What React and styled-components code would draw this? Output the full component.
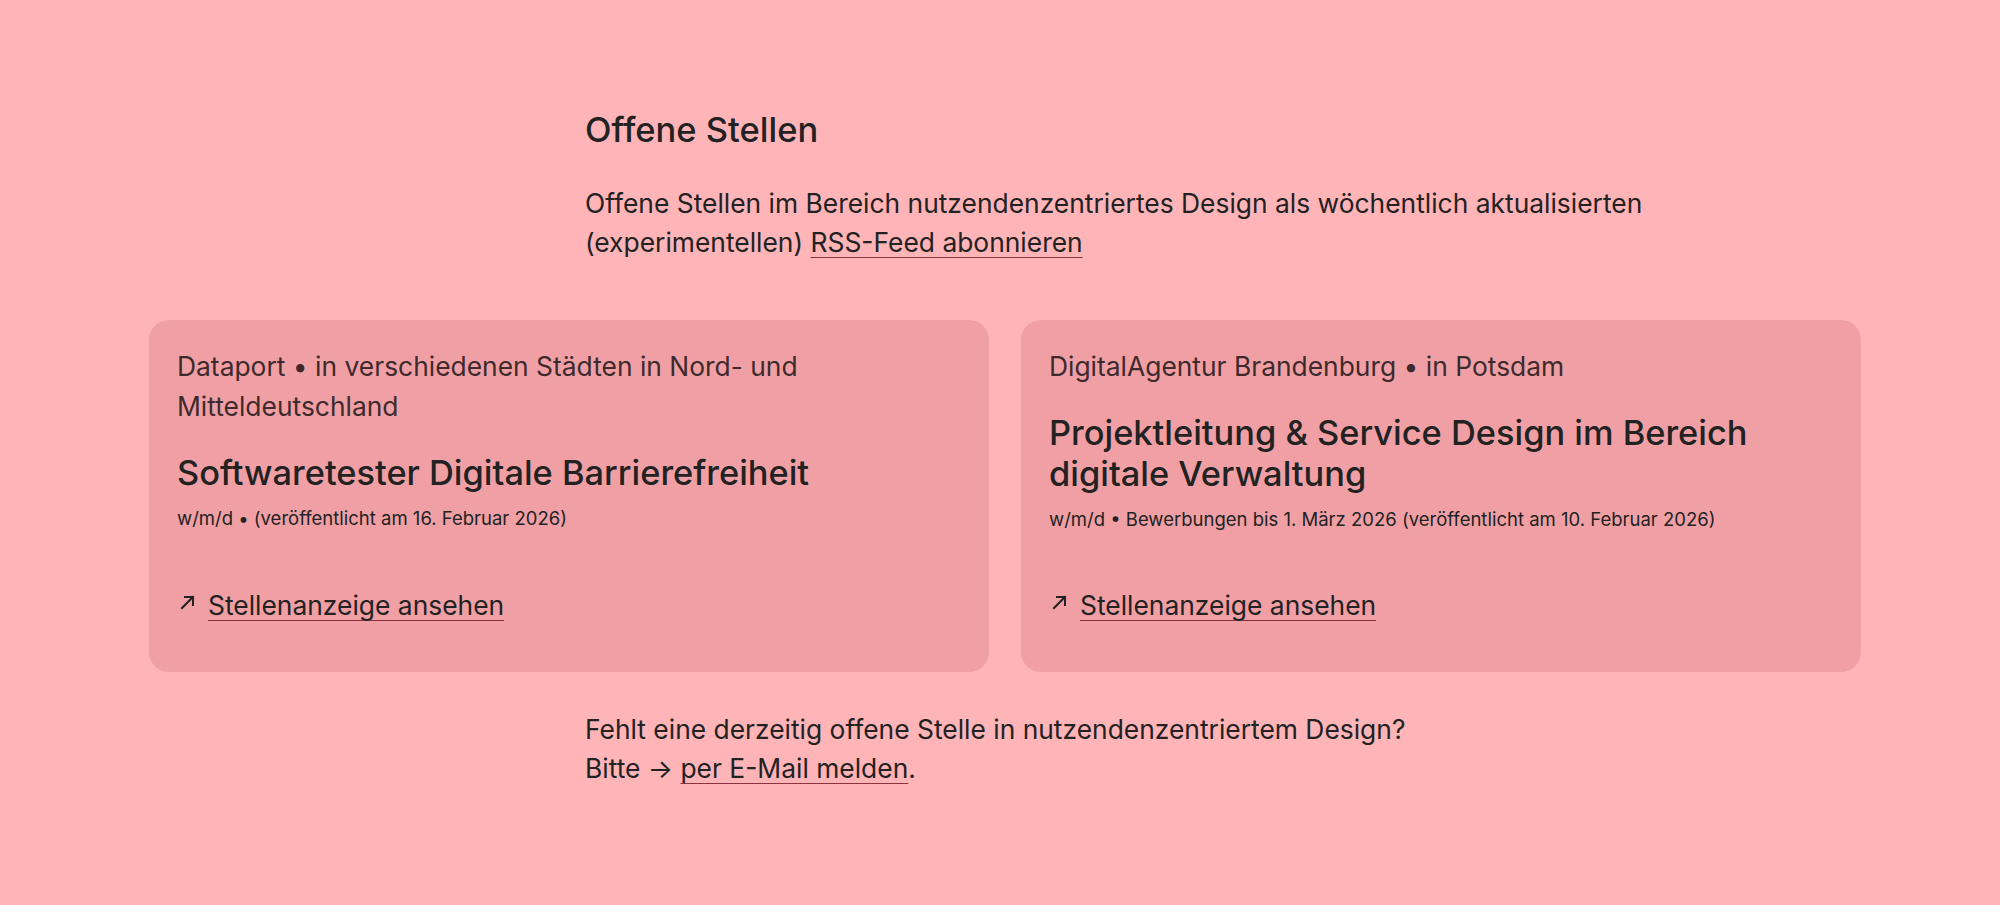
import React from "react";
import styled, { createGlobalStyle } from "styled-components";

const Global = createGlobalStyle`
  html, body { margin: 0; padding: 0; }
  body {
    background: #ffb4b8;
    font-family: Inter, "Noto Sans", sans-serif;
    color: #222222;
    -webkit-font-smoothing: antialiased;
  }
`;

const Page = styled.main`
  padding: 110px 0 80px 149px;
`;

const Intro = styled.section`
  margin-left: 436px;
  max-width: 1120px;
`;

const Heading = styled.h2`
  margin: 0;
  font-size: 34.5px;
  line-height: 40px;
  font-weight: 500;
`;

const Text = styled.p`
  margin: ${(p) => p.$mt || 0}px 0 0;
  font-size: 26.4px;
  line-height: 39px;
  font-weight: 400;
`;

const Link = styled.a`
  color: inherit;
  text-decoration: underline;
  text-decoration-color: #8a3440;
  text-decoration-thickness: 1px;
  text-underline-offset: 5px;
`;

const Grid = styled.div`
  display: grid;
  grid-template-columns: 840px 840px;
  gap: 32px;
  margin: 58px 0 0;
  align-items: stretch;
`;

const Card = styled.article`
  background: #f0a0a5;
  border-radius: 20px;
  padding: 26px 28px 47px;
  display: flex;
  flex-direction: column;
`;

const Meta = styled.p`
  margin: 0;
  font-size: 26.4px;
  line-height: 40px;
  color: #3e2a2d;
`;

const Title = styled.h3`
  margin: 26px 0 0;
  font-size: 34.4px;
  line-height: 41px;
  font-weight: 500;
  color: #222222;
`;

const Small = styled.p`
  margin: 13px 0 0;
  font-size: 18.5px;
  line-height: 24px;
  color: #222222;
`;

const CardLink = styled.a`
  margin-top: auto;
  padding-top: 54px;
  display: flex;
  align-items: center;
  gap: 12px;
  font-size: 26.4px;
  line-height: 40px;
  color: #222222;
  text-decoration: none;
`;

const LinkText = styled.span`
  text-decoration: underline;
  text-decoration-color: #8a3440;
  text-decoration-thickness: 1px;
  text-underline-offset: 5px;
`;

const ArrowIcon = styled.svg`
  flex: none;
  margin: -6px 0 0 3px;
`;

const Arrow = () => (
  <ArrowIcon width="16" height="16" viewBox="0 0 16 16" fill="none" stroke="#222" strokeWidth="2" strokeLinecap="square" aria-hidden="true">
    <path d="M2 14 L13 3" />
    <path d="M5 3 H13 V11" />
  </ArrowIcon>
);

const Footer = styled.section`
  margin: 38px 0 0 436px;
`;

const jobs = [
  {
    meta: "Dataport • in verschiedenen Städten in Nord- und Mitteldeutschland",
    title: "Softwaretester Digitale Barrierefreiheit",
    small: "w/m/d • (veröffentlicht am 16. Februar 2026)",
  },
  {
    meta: "DigitalAgentur Brandenburg • in Potsdam",
    title: "Projektleitung & Service Design im Bereich digitale Verwaltung",
    small: "w/m/d • Bewerbungen bis 1. März 2026 (veröffentlicht am 10. Februar 2026)",
  },
];

export default function App() {
  return (
    <>
      <Global />
      <Page>
        <Intro>
          <Heading>Offene Stellen</Heading>
          <Text $mt={34}>
            Offene Stellen im Bereich nutzendenzentriertes Design als wöchentlich aktualisierten (experimentellen){" "}
            <Link href="#">RSS-Feed abonnieren</Link>
          </Text>
        </Intro>
        <Grid>
          {jobs.map((j) => (
            <Card key={j.title}>
              <Meta>{j.meta}</Meta>
              <Title>{j.title}</Title>
              <Small>{j.small}</Small>
              <CardLink href="#">
                <Arrow />
                <LinkText>Stellenanzeige ansehen</LinkText>
              </CardLink>
            </Card>
          ))}
        </Grid>
        <Footer>
          <Text>
            Fehlt eine derzeitig offene Stelle in nutzendenzentriertem Design?
            <br />
            Bitte → <Link href="#">per E-Mail melden</Link>.
          </Text>
        </Footer>
      </Page>
    </>
  );
}
